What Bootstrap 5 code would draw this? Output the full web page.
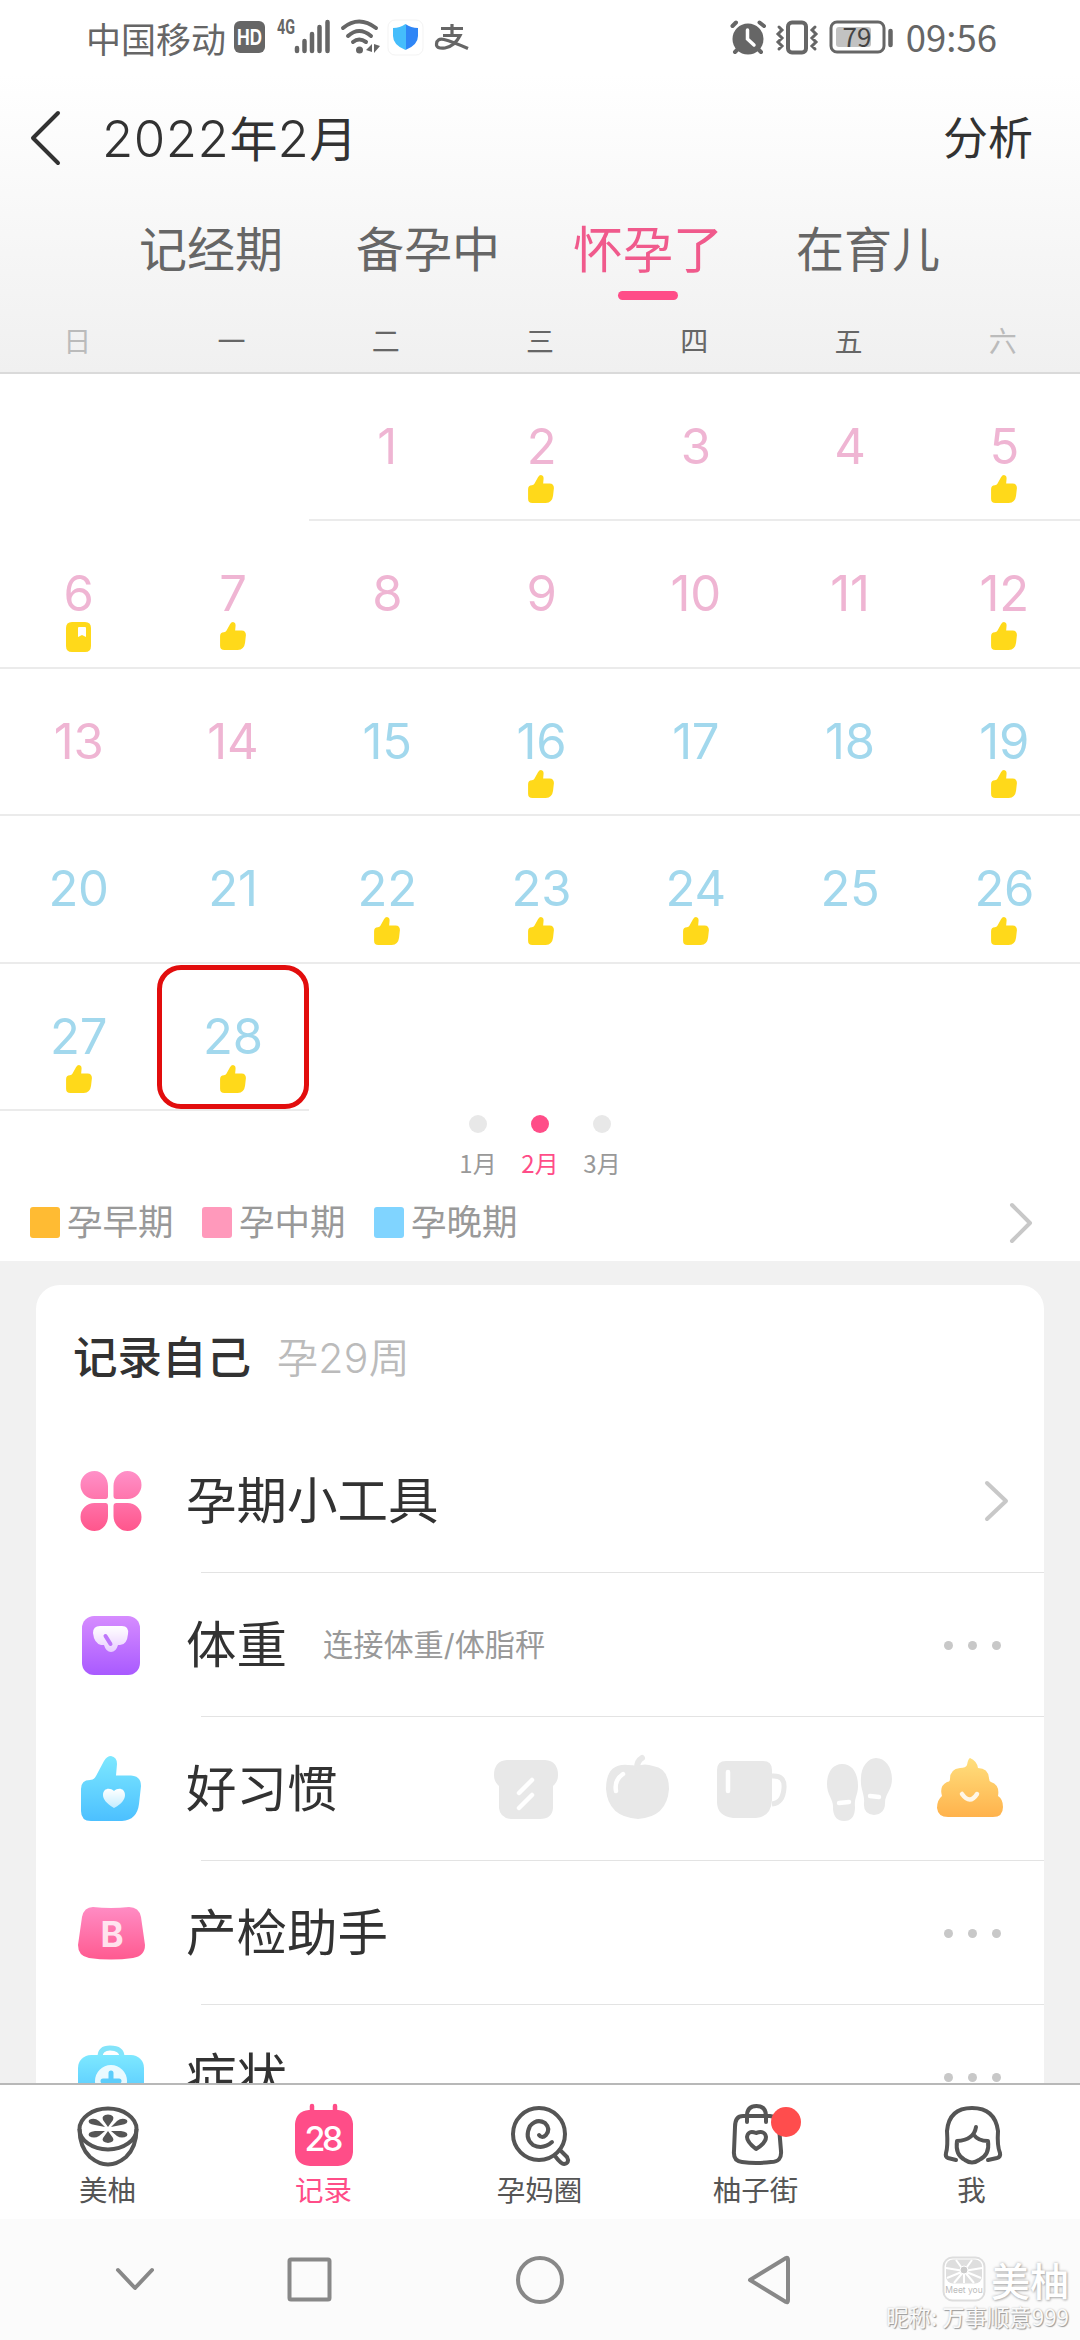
<!DOCTYPE html>
<html lang="zh-CN">
<head>
<meta charset="utf-8">
<meta name="viewport" content="width=device-width, initial-scale=1">
<title>2022年2月</title>
<link rel="stylesheet" href="https://cdn.jsdelivr.net/npm/bootstrap@5.3.0/dist/css/bootstrap.min.css">
<style>
html,body{height:2340px;overflow:hidden;background:#fff}
body{width:1080px;font-family:Inter,"Noto Sans CJK SC",sans-serif;color:#323232;line-height:1}
svg{display:block;flex:none;overflow:visible}
.cjk{font-family:"Noto Sans CJK SC",sans-serif}
.pink{color:#ff4d88!important}
.top-area{height:374px;background:linear-gradient(#fff 20%,#f0f0f0);border-bottom:2px solid #dadada}
.status{height:74px;padding:0 83px 0 86px;color:#666}
.carrier{font-size:35px}
.clock{font-size:36.5px;margin-left:13px}
.titlebar{height:128px;padding:0 47px 0 30px}
.month-title{font-size:48px;margin-left:40px}
.month-title span{font-size:51px;letter-spacing:.5px;font-weight:350}
.analyse{font-size:45px}
.mode-tabs{height:100px;padding-left:139px;font-size:48px;color:#666}
.mode-tabs .tab{height:98px;line-height:96px;margin-right:73px;white-space:nowrap}
.mode-tabs .tab.on{font-size:50px;color:#f05a8c}
.tab-line{width:60px;height:9px;border-radius:5px;background:#ff4d88;bottom:0;left:45px}
.week{height:70px;font-size:28px;color:#666;padding-top:10px}
.week .off{color:#bbb}
.cal{height:741px}
.week-row{height:147.4px}
.day{width:14.2857%;border-bottom:2px solid #ebebeb;padding-top:48px;padding-left:3px;font-size:49px;letter-spacing:-.2px;font-weight:400}
.day.none{border-color:transparent}
.day svg{margin-top:3px}
.mid{color:#efb5d3}.late{color:#a2d8ed}
.num{height:50px;line-height:50px}
.ring{left:3px;top:1px;width:152px;height:144px;border:5px solid #e20d0d;border-radius:24px}
.months{height:65px;gap:62px;font-size:24px;color:#999}
.months>div{width:0;white-space:nowrap}
.dot{width:18px;height:18px;border-radius:50%;background:#e8e8e8;margin-bottom:18px;flex:none}
.legend{height:81px;padding:4px 48px 0 30px;font-size:35.5px;color:#999}
.sw{width:30px;height:31px;border-radius:3px;margin-right:7px}
.lg{width:172px;white-space:nowrap}
.feed{height:822px;background:#f1f1f1;padding:24px 36px 0;overflow:hidden}
.panel{background:#fff;border-radius:24px 24px 0 0;height:1000px}
.panel-head{height:144px;padding:2px 37px 0}
.panel-head b{font-size:44.500px;font-weight:500}
.panel-head span{font-size:41px;color:#bbb;margin-left:26px;letter-spacing:.3px;font-weight:350}
.item{height:144px;padding-left:38px}
.item-ico{width:74px;margin-right:38px}
.item-body{font-size:50.5px;position:relative}
.item-body:after{content:"";position:absolute;left:15px;right:0;bottom:0;height:1px;background:#e3e3e3}
.hint{font-size:30.2px;color:#999;margin-left:36px}
.more{gap:15px;margin-right:43px}
.more i{width:9px;height:9px;border-radius:50%;background:#c8c8c8}
.tabbar{height:136px;border-top:2px solid #b8b8b8;background:#fff;font-size:28.5px;color:#555;padding-top:14px}
.tabbar>div{width:216px;padding-right:1px}
.tabbar svg{margin-bottom:6px}
.sysnav{height:121px;background:#fbfbfb;position:relative}
.mark-box{right:11px;top:37px;color:#fff}
.mark-box .wname{font-size:39px;font-weight:500;text-shadow:0 0 3px #aaa,1px 1px 2px #bbb}
.mark-box .nick{font-size:22.4px;text-shadow:1px 1px 1px #999,0 0 2px #bbb;margin-top:3px;white-space:nowrap;color:#fafafa}
</style>
</head>
<body class="d-flex flex-column">
<svg width="0" height="0" class="position-absolute">
  <defs>
    <linearGradient id="gp" x1="0" y1="0" x2="0" y2="1"><stop stop-color="#ff8cc4"/><stop offset="1" stop-color="#ff5a90"/></linearGradient>
    <linearGradient id="gpu" gradientUnits="userSpaceOnUse" x1="0" y1="0" x2="0" y2="60"><stop stop-color="#ff90c8"/><stop offset="1" stop-color="#ff568c"/></linearGradient>
    <linearGradient id="gv" x1="0" y1="0" x2="0" y2="1"><stop stop-color="#d68cff"/><stop offset="1" stop-color="#a95aff"/></linearGradient>
    <linearGradient id="gb" x1="0" y1="0" x2="0" y2="1"><stop stop-color="#7de8ff"/><stop offset="1" stop-color="#4cc0ff"/></linearGradient>
    <linearGradient id="go" x1="0" y1="0" x2="0" y2="1"><stop stop-color="#ffdf7d"/><stop offset="1" stop-color="#ffb24c"/></linearGradient>
    <linearGradient id="gw" x1="0" y1="0" x2="0" y2="1"><stop stop-color="#fff"/><stop offset="1" stop-color="#fff" stop-opacity=".65"/></linearGradient>
    <linearGradient id="gs"><stop offset=".5" stop-color="#45bdfb"/><stop offset=".5" stop-color="#2f86f6"/></linearGradient>
    <path id="thumb" d="M0 33Q0 24 9 24Q13 24 15 20L23 5Q26 0 30 0Q36 1 36 8L35 19.500H50Q60 20 60 30L58 48Q56 64 41 65H10Q0 65 0 55Z"/>
    <symbol id="like" viewBox="0 0 60 65"><use href="#thumb" fill="#ffd91a"/></symbol>
    <symbol id="note" viewBox="0 0 25 30"><path fill="#ffd91a" fill-rule="evenodd" d="M6 0H19Q25 0 25 6V24Q25 30 19 30H6Q0 30 0 24V6Q0 0 6 0ZM12 6V15L16 13L20 15V6Q20 5 19 5H13Q12 5 12 6Z"/></symbol>
  </defs>
</svg>

<header class="top-area flex-shrink-0">
  <div class="status d-flex align-items-center cjk">
    <span class="carrier">中国移动</span>
    <svg width="242" height="36" viewBox="0 0 242 36" class="ms-2">
      <g fill="#666">
        <rect y="2" width="31" height="32" rx="6"/>
        <text x="15.500" y="26" font-size="21" font-weight="700" fill="#fff" text-anchor="middle" textLength="25" lengthAdjust="spacingAndGlyphs" font-family="Inter">HD</text>
        <text x="43" y="15" font-size="20" font-weight="700" textLength="18" lengthAdjust="spacingAndGlyphs" font-family="Roboto">4G</text>
      </g>
      <g stroke="#666" stroke-width="4.500" stroke-linecap="round" fill="none">
        <path d="M63 29V32M70.500 22V32M78 15V32M85.500 8V32M93.500 3V32"/>
        <path d="M109 9Q125-4 142 9M114 17Q125 7 137 17M119 23Q125 18 132 23" stroke-width="4"/>
      </g>
      <circle cx="125.500" cy="31" r="3.500" fill="#666"/><path d="M132 31l6-6v8zM140 25v9l6-7z" fill="#666"/>
      <rect x="154" y="1" width="35" height="35" rx="7" fill="#fff" stroke="#f3f3f3"/>
      <path d="M171.500 5Q177 9 184 9V17Q184 26 171.500 31Q159 26 159 17V9Q166 9 171.500 5Z" fill="url(#gs)"/>
      <g fill="none" stroke="#666" stroke-width="3.200"><path d="M207 9.500H229M218 5V16M209 16.500H226Q221 27 211 29Q202 30 202.500 25Q203 19 210 20.500Q218 22.500 234 29.500"/></g>
    </svg>
    <svg width="163" height="36" viewBox="0 0 163 36" class="ms-auto">
      <g stroke="#666" fill="none" stroke-linecap="round">
        <circle cx="18" cy="20" r="15.500" fill="#666" stroke="none"/>
        <path d="M17.500 11V20L24 26" stroke="#fff" stroke-width="3.500"/>
        <path d="M2.500 7L6 3.500M29.500 3.500L34 7M5 33L8 30M28 30L31 33" stroke-width="4"/>
        <rect x="58" y="3.500" width="18" height="30" rx="4" stroke-width="4"/>
        <path d="M49 8l3 3-4 4 4 4-4 4 4 4-3 3M85 8l-3 3 4 4-4 4 4 4-4 4 3 3" stroke-width="3"/>
        <rect x="101" y="3" width="53" height="30" rx="6" stroke-width="3"/>
        <path d="M160.500 12V26" stroke-width="4.500"/>
      </g>
      <rect x="106" y="8" width="35" height="20" rx="3" fill="#c2c2c2"/>
      <text x="127" y="27.500" font-size="26" fill="#444" text-anchor="middle" font-family="Noto Sans CJK SC">79</text>
    </svg>
    <span class="clock">09:56</span>
  </div>
  <div class="titlebar d-flex align-items-center">
    <svg width="32" height="56" viewBox="0 0 32 56"><path d="M28 3L3 28L28 53" fill="none" stroke="#323232" stroke-width="4" stroke-linecap="round" stroke-linejoin="round"/></svg>
    <div class="month-title"><span>2022</span>年<span>2</span>月</div>
    <div class="analyse ms-auto">分析</div>
  </div>
  <nav class="mode-tabs d-flex">
    <div class="tab">记经期</div><div class="tab">备孕中</div><div class="tab on position-relative">怀孕了<span class="tab-line position-absolute"></span></div><div class="tab">在育儿</div>
  </nav>
  <div class="week d-flex align-items-center text-center">
    <div class="col off">日</div><div class="col">一</div><div class="col">二</div><div class="col">三</div><div class="col">四</div><div class="col">五</div><div class="col off">六</div>
  </div>
</header>

<main class="flex-shrink-0">
  <section class="cal">
    <div class="week-row d-flex">
      <div class="day none"></div><div class="day none"></div>
      <div class="day mid d-flex flex-column align-items-center"><div class="num">1</div></div>
      <div class="day mid d-flex flex-column align-items-center"><div class="num">2</div><svg width="26" height="28"><use href="#like"/></svg></div>
      <div class="day mid d-flex flex-column align-items-center"><div class="num">3</div></div>
      <div class="day mid d-flex flex-column align-items-center"><div class="num">4</div></div>
      <div class="day mid d-flex flex-column align-items-center"><div class="num">5</div><svg width="26" height="28"><use href="#like"/></svg></div>
    </div>
    <div class="week-row d-flex">
      <div class="day mid d-flex flex-column align-items-center"><div class="num">6</div><svg width="25" height="30"><use href="#note"/></svg></div>
      <div class="day mid d-flex flex-column align-items-center"><div class="num">7</div><svg width="26" height="28"><use href="#like"/></svg></div>
      <div class="day mid d-flex flex-column align-items-center"><div class="num">8</div></div>
      <div class="day mid d-flex flex-column align-items-center"><div class="num">9</div></div>
      <div class="day mid d-flex flex-column align-items-center"><div class="num">10</div></div>
      <div class="day mid d-flex flex-column align-items-center"><div class="num">11</div></div>
      <div class="day mid d-flex flex-column align-items-center"><div class="num">12</div><svg width="26" height="28"><use href="#like"/></svg></div>
    </div>
    <div class="week-row d-flex">
      <div class="day mid d-flex flex-column align-items-center"><div class="num">13</div></div>
      <div class="day mid d-flex flex-column align-items-center"><div class="num">14</div></div>
      <div class="day late d-flex flex-column align-items-center"><div class="num">15</div></div>
      <div class="day late d-flex flex-column align-items-center"><div class="num">16</div><svg width="26" height="28"><use href="#like"/></svg></div>
      <div class="day late d-flex flex-column align-items-center"><div class="num">17</div></div>
      <div class="day late d-flex flex-column align-items-center"><div class="num">18</div></div>
      <div class="day late d-flex flex-column align-items-center"><div class="num">19</div><svg width="26" height="28"><use href="#like"/></svg></div>
    </div>
    <div class="week-row d-flex">
      <div class="day late d-flex flex-column align-items-center"><div class="num">20</div></div>
      <div class="day late d-flex flex-column align-items-center"><div class="num">21</div></div>
      <div class="day late d-flex flex-column align-items-center"><div class="num">22</div><svg width="26" height="28"><use href="#like"/></svg></div>
      <div class="day late d-flex flex-column align-items-center"><div class="num">23</div><svg width="26" height="28"><use href="#like"/></svg></div>
      <div class="day late d-flex flex-column align-items-center"><div class="num">24</div><svg width="26" height="28"><use href="#like"/></svg></div>
      <div class="day late d-flex flex-column align-items-center"><div class="num">25</div></div>
      <div class="day late d-flex flex-column align-items-center"><div class="num">26</div><svg width="26" height="28"><use href="#like"/></svg></div>
    </div>
    <div class="week-row d-flex">
      <div class="day late d-flex flex-column align-items-center"><div class="num">27</div><svg width="26" height="28"><use href="#like"/></svg></div>
      <div class="day late d-flex flex-column align-items-center position-relative"><div class="num">28</div><svg width="26" height="28"><use href="#like"/></svg><span class="ring position-absolute"></span></div>
    </div>
  </section>
  <div class="months d-flex justify-content-center cjk">
    <div class="d-flex flex-column align-items-center"><span class="dot"></span>1月</div>
    <div class="d-flex flex-column align-items-center pink"><span class="dot" style="background:#ff4d88"></span>2月</div>
    <div class="d-flex flex-column align-items-center"><span class="dot"></span>3月</div>
  </div>
  <div class="legend d-flex align-items-center">
    <div class="lg d-flex align-items-center"><span class="sw" style="background:#ffbb33"></span>孕早期</div>
    <div class="lg d-flex align-items-center"><span class="sw" style="background:#ff99bb"></span>孕中期</div>
    <div class="lg d-flex align-items-center"><span class="sw" style="background:#80d4ff"></span>孕晚期</div>
    <svg width="22" height="40" viewBox="0 0 22 40" class="ms-auto"><path d="M2 2L20 20L2 38" fill="none" stroke="#c8c8c8" stroke-width="4" stroke-linecap="round" stroke-linejoin="round"/></svg>
  </div>
</main>

<section class="feed flex-shrink-0">
  <div class="panel">
    <div class="panel-head d-flex align-items-center"><b>记录自己</b><span>孕29周</span></div>
    <div class="item d-flex align-items-center">
      <svg class="item-ico" width="74" height="60" viewBox="-7.500 0 74 60"><g fill="url(#gpu)"><path d="M13 0C21 0 26.500 7 26.500 15V25Q26.500 28 24 28H13A14 14 0 0 1 13 0ZM46 0C38 0 32 7 32 15V25Q32 28 35 28H46A14 14 0 0 0 46 0ZM13 60C21 60 26.500 53 26.500 45V35Q26.500 32 24 32H13A14 14 0 0 0 13 60ZM46 60C38 60 32 53 32 45V35Q32 32 35 32H46A14 14 0 0 1 46 60Z"/></g></svg>
      <div class="item-body flex-grow-1 h-100 d-flex align-items-center">孕期小工具
        <svg width="24" height="40" viewBox="0 0 24 40" class="ms-auto" style="margin-right:35px"><path d="M2 2L21 20L2 38" fill="none" stroke="#c8c8c8" stroke-width="4" stroke-linecap="round" stroke-linejoin="round"/></svg>
      </div>
    </div>
    <div class="item d-flex align-items-center">
      <svg class="item-ico" width="74" height="59" viewBox="-8 0 74 59"><rect width="58" height="59" rx="12" fill="url(#gv)"/><path d="M18 10H40Q47 10 46 18Q45 29 38 29H36Q34 36 29 36Q24 36 22 29H19Q12 27 11 17Q11 10 18 10Z" fill="url(#gw)"/><path d="M23.500 20L28.500 28" stroke="#be76fa" stroke-width="4" stroke-linecap="round"/></svg>
      <div class="item-body flex-grow-1 h-100 d-flex align-items-center">体重<span class="hint">连接体重/体脂秤</span><span class="more d-flex ms-auto"><i></i><i></i><i></i></span></div>
    </div>
    <div class="item d-flex align-items-center">
      <svg class="item-ico" width="74" height="65" viewBox="-7 1 74 65"><use href="#thumb" fill="url(#gb)"/><path d="M33 52C25 47 22 43 22 39C22 32 29 31 33 35C37 31 44 32 44 39C44 43 41 48 33 52Z" fill="url(#gw)"/></svg>
      <div class="item-body flex-grow-1 h-100 d-flex align-items-center">好习惯
        <svg width="511" height="66" viewBox="0 1 511 66" class="ms-auto" style="margin-right:40px">
          <g fill="#e8e8e8" transform="translate(1,0)">
            <path d="M13 5H51Q64 6 64 20Q64 27 59 31V53Q58 64 46 64H17Q6 63 5 53V31Q0 27 0 20Q0 6 13 5Z"/>
            <path d="M25 38L38 25M25 53L38 40" stroke="#fff" stroke-width="4.500" stroke-linecap="round"/>
            <path d="M143 11Q151 8 159 11Q175 13 175 34Q173 62 144 64Q114 62 112 34Q112 8 134 10Q139 10 143 11Z"/>
            <path d="M143 13Q143 6 148 3" fill="none" stroke="#e8e8e8" stroke-width="6" stroke-linecap="round"/>
            <path d="M122 36Q120 25 129 19" fill="none" stroke="#fff" stroke-width="4.500" stroke-linecap="round"/>
            <path d="M232 6H269Q278 6 278 15V45Q277 62 262 63H239Q223 61 223 47V15Q223 6 232 6Z"/>
            <path d="M278 21Q291 20 290 33Q289 48 278 49" fill="none" stroke="#e8e8e8" stroke-width="5"/>
            <path d="M234 17V36" stroke="#fff" stroke-width="4.500" stroke-linecap="round"/>
            <path d="M348 9C359 9 364 19 364 31C364 40 360 43 361 52Q361 66 350 66Q340 66 339 54C340 44 333 41 333 29C333 17 339 9 348 9Z"/>
            <path d="M382 3C391 3 398 12 398 24C398 35 391 39 391 48Q391 59 380 60Q369 59 370 48C371 39 366 34 367 23C367 12 374 3 382 3Z"/>
            <path d="M345 48L355 47M376 41L385 42" stroke="#fff" stroke-width="4.500" stroke-linecap="round"/>
          </g>
          <path fill="url(#go)" d="M477 3Q475 4 474 10Q473 13 467 13Q457 14 457 24Q457 27 454 27Q446 31 449 41Q444 45 444 53Q445 62 455 62H500Q510 62 510 52Q510 44 505 41Q507 30 498 27Q496 26 496 23Q495 13 485 13Q484 6 477 3Z"/>
          <path d="M469 39Q477 50 484 39" fill="none" stroke="#fff" opacity=".85" stroke-width="4.500" stroke-linecap="round"/>
        </svg>
      </div>
    </div>
    <div class="item d-flex align-items-center">
      <svg class="item-ico" width="74" height="54" viewBox="-4 0 74 54"><path d="M15 1Q33 3 51 1Q61 1 63 11L67 39Q67 50 55 52Q33 55 11 52Q0 50 0 39L4 11Q6 1 15 1Z" fill="url(#gp)"/><text x="34" y="40.500" font-family="Inter" font-weight="700" font-size="35" text-anchor="middle" fill="#fff" opacity=".8">B</text></svg>
      <div class="item-body flex-grow-1 h-100 d-flex align-items-center">产检助手<span class="more d-flex ms-auto"><i></i><i></i><i></i></span></div>
    </div>
    <div class="item d-flex align-items-center">
      <svg class="item-ico" width="74" height="64" viewBox="-4 0 74 64"><path d="M22 12Q22 3 32 3Q44 3 44 12" fill="none" stroke="#83e4fa" stroke-width="5"/><rect y="10" width="66" height="54" rx="13" fill="url(#gb)"/><circle cx="33" cy="36" r="16" fill="#fff" opacity=".85"/><path d="M33 28V44M25 36H41" stroke="#5ccdfb" stroke-width="5" stroke-linecap="round"/></svg>
      <div class="item-body flex-grow-1 h-100 d-flex align-items-center">症状<span class="more d-flex ms-auto"><i></i><i></i><i></i></span></div>
    </div>
  </div>
</section>

<nav class="tabbar d-flex flex-shrink-0">
  <div class="d-flex flex-column align-items-center">
    <svg width="62" height="72" viewBox="0 0 62 72"><g fill="none" stroke="#555" stroke-width="4"><ellipse cx="31" cy="30" rx="28.500" ry="20.500"/><path d="M2.500 30Q2.500 48 13 58Q31 73 49 58Q59.500 48 59.500 30"/></g><g fill="#555"><path d="M31 28L26 21Q24 16 31 15.500Q38 16 36 21ZM31 32L26 39Q24 43 31 44Q38 43 36 39Z"/><path d="M28 28L18 26Q10 25 12 21Q17 18 22 22ZM34 28L44 26Q52 25 50 21Q45 18 40 22ZM28 32L18 32Q10 33 12 37Q17 40 22 37ZM34 32L44 32Q52 33 50 37Q45 40 40 37Z"/></g></svg>美柚
  </div>
  <div class="d-flex flex-column align-items-center pink">
    <svg width="62" height="72" viewBox="0 0 62 72"><path d="M19 7V14M42 7V14" stroke="#ff4d88" stroke-width="4.500" stroke-linecap="round"/><path d="M16 11H45Q59 12 60 25V53Q59 66 45 67H17Q3 66 2 53V25Q3 12 16 11Z" fill="#ff4d88"/><text x="31" y="52" font-family="Inter" font-size="34" font-weight="500" fill="#fff" text-anchor="middle" textLength="39">28</text></svg>记录
  </div>
  <div class="d-flex flex-column align-items-center">
    <svg width="62" height="72" viewBox="0 0 62 72"><g fill="none" stroke="#555" stroke-width="4" stroke-linecap="round"><circle cx="30" cy="35" r="26"/><path d="M30 36Q33 40 37 36Q42 30 36 24Q28 19 21 27Q15 39 24 46Q34 51 43 43"/><path d="M51 51L58 58Q61 64 55 65Q52 65 46 57"/></g></svg>孕妈圈
  </div>
  <div class="d-flex flex-column align-items-center">
    <svg width="62" height="72" viewBox="0 0 62 72"><g fill="none" stroke="#555" stroke-width="4" stroke-linecap="round" stroke-linejoin="round"><path d="M18 17H45Q54 18 54 28L56 52Q57 63 46 63Q31 65 17 63Q8 62 9 52L10 28Q10 17 18 17Z"/><path d="M22 23V17Q22 7 31.500 7Q41 7 41 17V23M31 50Q22 43 22 38Q23 31 31 34Q40 31 41 38Q41 44 31 50Z"/></g><circle cx="61" cy="23" r="15" fill="#ff4d4d"/></svg>柚子街
  </div>
  <div class="d-flex flex-column align-items-center">
    <svg width="62" height="72" viewBox="0 0 62 72"><g fill="none" stroke="#555" stroke-width="4" stroke-linecap="round" stroke-linejoin="round"><path d="M15 61L7 59Q4 58 5 54Q7 48 6 32Q8 9 31 9Q54 9 57 32Q56 47 59 54Q60 58 56 59L47 61"/><path d="M35 28Q33 41 16 42Q14 56 24 61Q31 66 38 61Q49 56 47 42Q37 42 33 36"/></g></svg>我
  </div>
</nav>

<footer class="sysnav flex-shrink-0">
  <svg width="1080" height="121" viewBox="0 0 1080 121"><g fill="none" stroke="#888" stroke-width="4" stroke-linecap="round" stroke-linejoin="round"><path d="M118 51L135 69L152 51"/><rect x="289.500" y="40.500" width="40" height="40" rx="1.500"/><circle cx="540" cy="61" r="22"/><path d="M750 61L786 39Q788 38 788 41V81Q788 84 786 83Z"/></g></svg>
  <div class="mark-box position-absolute d-flex flex-column align-items-end">
    <div class="d-flex align-items-center">
      <svg width="44" height="46" viewBox="0 0 44 46" style="margin-right:5px"><rect x="1.500" y="1.500" width="41" height="43" rx="9" fill="#fff" stroke="#ddd" stroke-width="2"/><rect x="4" y="3.500" width="36" height="24" rx="7" fill="#dedede"/><path d="M22 15L4 12M22 15L40 12M22 15L14 4M22 15L30 4M22 15L12 27M22 15L32 27M22 15L5 22M22 15L39 22M22 15V27" stroke="#fff" stroke-width="2"/><circle cx="22" cy="14" r="4" fill="#ccc" stroke="#fff"/><text x="22" y="37" font-size="8.500" font-family="Inter" fill="#bbb" text-anchor="middle">Meet you</text></svg>
      <span class="wname cjk">美柚</span>
    </div>
    <div class="nick cjk">昵称: 万事顺意999</div>
  </div>
</footer>
<script src="https://cdn.jsdelivr.net/npm/bootstrap@5.3.0/dist/js/bootstrap.bundle.min.js"></script>
</body>
</html>
